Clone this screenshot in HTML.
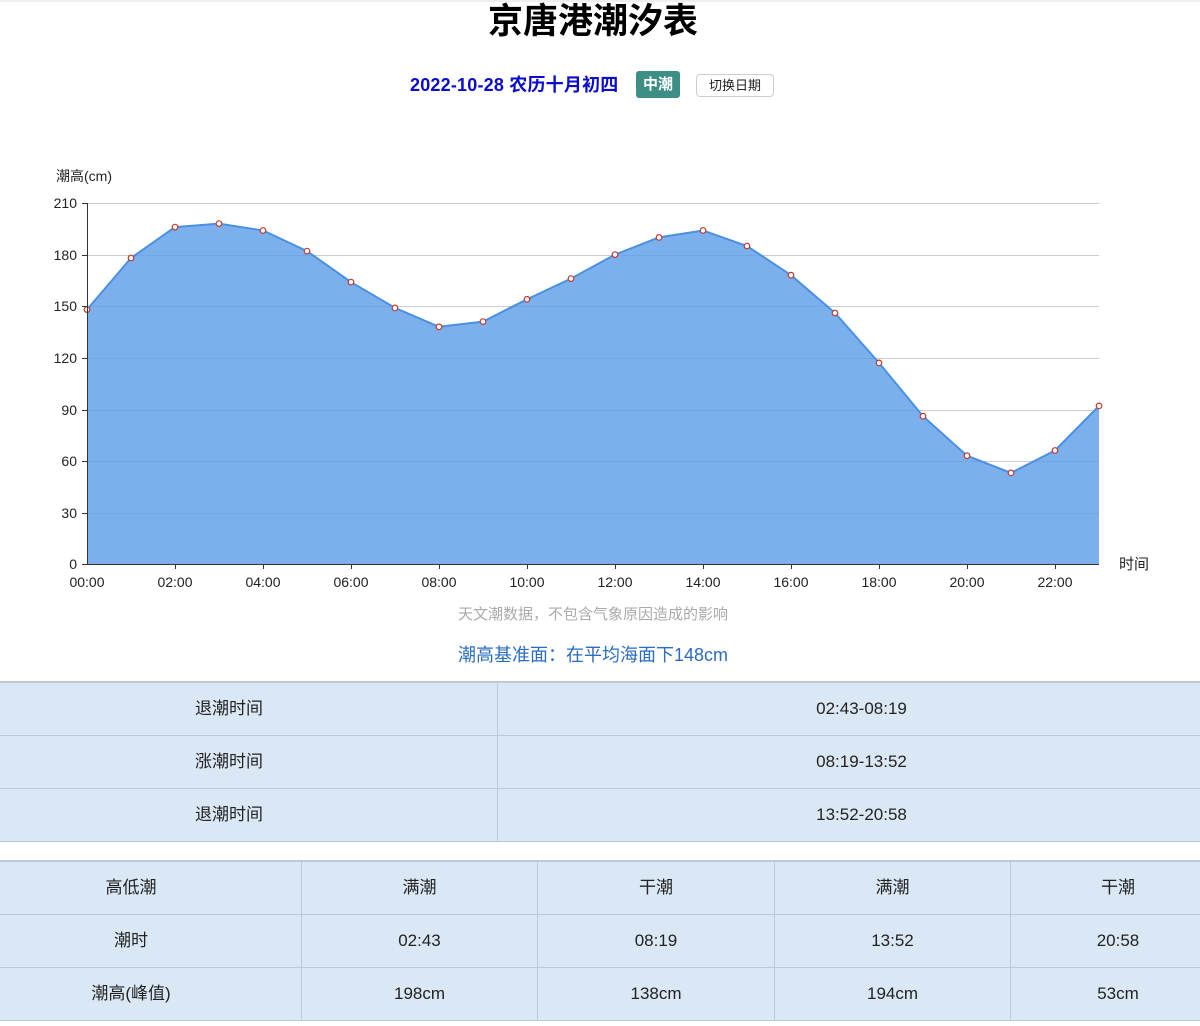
<!DOCTYPE html>
<html><head><meta charset="utf-8"><style>
body{margin:0;background:#fff;font-family:"Liberation Sans","Noto Sans CJK SC",sans-serif;width:1200px;height:1026px;overflow:hidden;position:relative}
.t{position:absolute;left:0;width:1200px;text-align:center}
table{position:absolute;left:-40px;width:1266px;border-collapse:collapse;background:#dae8f5;font-size:17px;color:#222;table-layout:fixed}
td{border:1px solid #b9cadb;text-align:center;height:52px;padding:0;line-height:20px;vertical-align:middle}
td span{display:inline-block;vertical-align:middle}
</style></head><body>
<div style="position:absolute;top:0;left:0;width:1200px;height:2px;background:#eee"></div>
<div class="t" style="top:0;font-size:35px;font-weight:bold;line-height:44px;left:-7px">京唐港潮汐表</div>
<div style="position:absolute;top:72px;left:410px;font-size:18px;color:#0a0ad0;line-height:26px;font-weight:bold;letter-spacing:0.2px">2022-10-28 农历十月初四</div>
<div style="position:absolute;top:71px;left:636px;width:44px;height:27px;background:#3d8f86;color:#fff;border-radius:3px;font-size:15px;font-weight:bold;line-height:27px;text-align:center">中潮</div>
<div style="position:absolute;top:74px;left:696px;width:76px;height:21px;border:1px solid #ccc;border-radius:4px;font-size:13px;line-height:21px;text-align:center;color:#222">切换日期</div>
<svg style="position:absolute;left:0;top:0" width="1200" height="680" font-family="Liberation Sans,Noto Sans CJK SC,sans-serif">
<g stroke="#ccc" stroke-width="1">
<line x1="87" y1="203.5" x2="1099" y2="203.5"/><line x1="87" y1="255.5" x2="1099" y2="255.5"/><line x1="87" y1="306.5" x2="1099" y2="306.5"/><line x1="87" y1="358.5" x2="1099" y2="358.5"/><line x1="87" y1="410.5" x2="1099" y2="410.5"/><line x1="87" y1="461.5" x2="1099" y2="461.5"/><line x1="87" y1="513.5" x2="1099" y2="513.5"/>
</g>
<polygon fill="#5b9ce9" fill-opacity="0.8" points="87,564 87,309.6 131,258 175,227.1 219,223.6 263,230.5 307,251.1 351,282.1 395,307.9 439,326.8 483,321.6 527,299.3 571,278.6 615,254.6 659,237.4 703,230.5 747,246 791,275.2 835,313 879,362.9 923,416.2 967,455.7 1011,472.9 1055,450.5 1099,405.9 1099,564"/>
<polyline fill="none" stroke="#4a90e2" stroke-width="2" points="87,309.6 131,258 175,227.1 219,223.6 263,230.5 307,251.1 351,282.1 395,307.9 439,326.8 483,321.6 527,299.3 571,278.6 615,254.6 659,237.4 703,230.5 747,246 791,275.2 835,313 879,362.9 923,416.2 967,455.7 1011,472.9 1055,450.5 1099,405.9"/>
<g fill="#fff" stroke="#c0392b" stroke-width="1.2">
<circle cx="87" cy="309.6" r="2.8"/><circle cx="131" cy="258" r="2.8"/><circle cx="175" cy="227.1" r="2.8"/><circle cx="219" cy="223.6" r="2.8"/><circle cx="263" cy="230.5" r="2.8"/><circle cx="307" cy="251.1" r="2.8"/><circle cx="351" cy="282.1" r="2.8"/><circle cx="395" cy="307.9" r="2.8"/><circle cx="439" cy="326.8" r="2.8"/><circle cx="483" cy="321.6" r="2.8"/><circle cx="527" cy="299.3" r="2.8"/><circle cx="571" cy="278.6" r="2.8"/><circle cx="615" cy="254.6" r="2.8"/><circle cx="659" cy="237.4" r="2.8"/><circle cx="703" cy="230.5" r="2.8"/><circle cx="747" cy="246" r="2.8"/><circle cx="791" cy="275.2" r="2.8"/><circle cx="835" cy="313" r="2.8"/><circle cx="879" cy="362.9" r="2.8"/><circle cx="923" cy="416.2" r="2.8"/><circle cx="967" cy="455.7" r="2.8"/><circle cx="1011" cy="472.9" r="2.8"/><circle cx="1055" cy="450.5" r="2.8"/><circle cx="1099" cy="405.9" r="2.8"/>
</g>
<g stroke="#333" stroke-width="1">
<line x1="87.5" y1="203" x2="87.5" y2="564"/><line x1="87" y1="564.5" x2="1099" y2="564.5"/>
<line x1="82" y1="203.5" x2="87" y2="203.5"/><line x1="82" y1="255.5" x2="87" y2="255.5"/><line x1="82" y1="306.5" x2="87" y2="306.5"/><line x1="82" y1="358.5" x2="87" y2="358.5"/><line x1="82" y1="410.5" x2="87" y2="410.5"/><line x1="82" y1="461.5" x2="87" y2="461.5"/><line x1="82" y1="513.5" x2="87" y2="513.5"/><line x1="82" y1="564.5" x2="87" y2="564.5"/>
<line x1="175.5" y1="564" x2="175.5" y2="569"/><line x1="263.5" y1="564" x2="263.5" y2="569"/><line x1="351.5" y1="564" x2="351.5" y2="569"/><line x1="439.5" y1="564" x2="439.5" y2="569"/><line x1="527.5" y1="564" x2="527.5" y2="569"/><line x1="615.5" y1="564" x2="615.5" y2="569"/><line x1="703.5" y1="564" x2="703.5" y2="569"/><line x1="791.5" y1="564" x2="791.5" y2="569"/><line x1="879.5" y1="564" x2="879.5" y2="569"/><line x1="967.5" y1="564" x2="967.5" y2="569"/><line x1="1055.5" y1="564" x2="1055.5" y2="569"/>
</g>
<g font-size="14" fill="#222" text-anchor="end">
<text x="77" y="208">210</text><text x="77" y="260">180</text><text x="77" y="311">150</text><text x="77" y="363">120</text><text x="77" y="415">90</text><text x="77" y="466">60</text><text x="77" y="518">30</text><text x="77" y="569">0</text>
</g>
<g font-size="14" fill="#222" text-anchor="middle">
<text x="87" y="587">00:00</text><text x="175" y="587">02:00</text><text x="263" y="587">04:00</text><text x="351" y="587">06:00</text><text x="439" y="587">08:00</text><text x="527" y="587">10:00</text><text x="615" y="587">12:00</text><text x="703" y="587">14:00</text><text x="791" y="587">16:00</text><text x="879" y="587">18:00</text><text x="967" y="587">20:00</text><text x="1055" y="587">22:00</text>
</g>
<text x="56" y="181" font-size="14" fill="#222">潮高(cm)</text>
<text x="1119" y="569" font-size="15" fill="#222">时间</text>
<text x="593" y="619" font-size="15" fill="#aaa" text-anchor="middle">天文潮数据，不包含气象原因造成的影响</text>
<text x="593" y="661" font-size="18" fill="#2a6cc0" text-anchor="middle">潮高基准面：在平均海面下148cm</text>
</svg>
<table style="top:681px;border-top:2px solid #b9cadb">
<tr><td style="width:536px">退潮时间</td><td>02:43-08:19</td></tr>
<tr><td>涨潮时间</td><td>08:19-13:52</td></tr>
<tr><td>退潮时间</td><td>13:52-20:58</td></tr>
</table>
<table style="top:860px;border-top:2px solid #b9cadb">
<tr><td style="width:340px">高低潮</td><td style="width:235px">满潮</td><td style="width:236px">干潮</td><td style="width:235px">满潮</td><td>干潮</td></tr>
<tr><td>潮时</td><td>02:43</td><td>08:19</td><td>13:52</td><td>20:58</td></tr>
<tr><td>潮高(峰值)</td><td>198cm</td><td>138cm</td><td>194cm</td><td>53cm</td></tr>
</table>
</body></html>
